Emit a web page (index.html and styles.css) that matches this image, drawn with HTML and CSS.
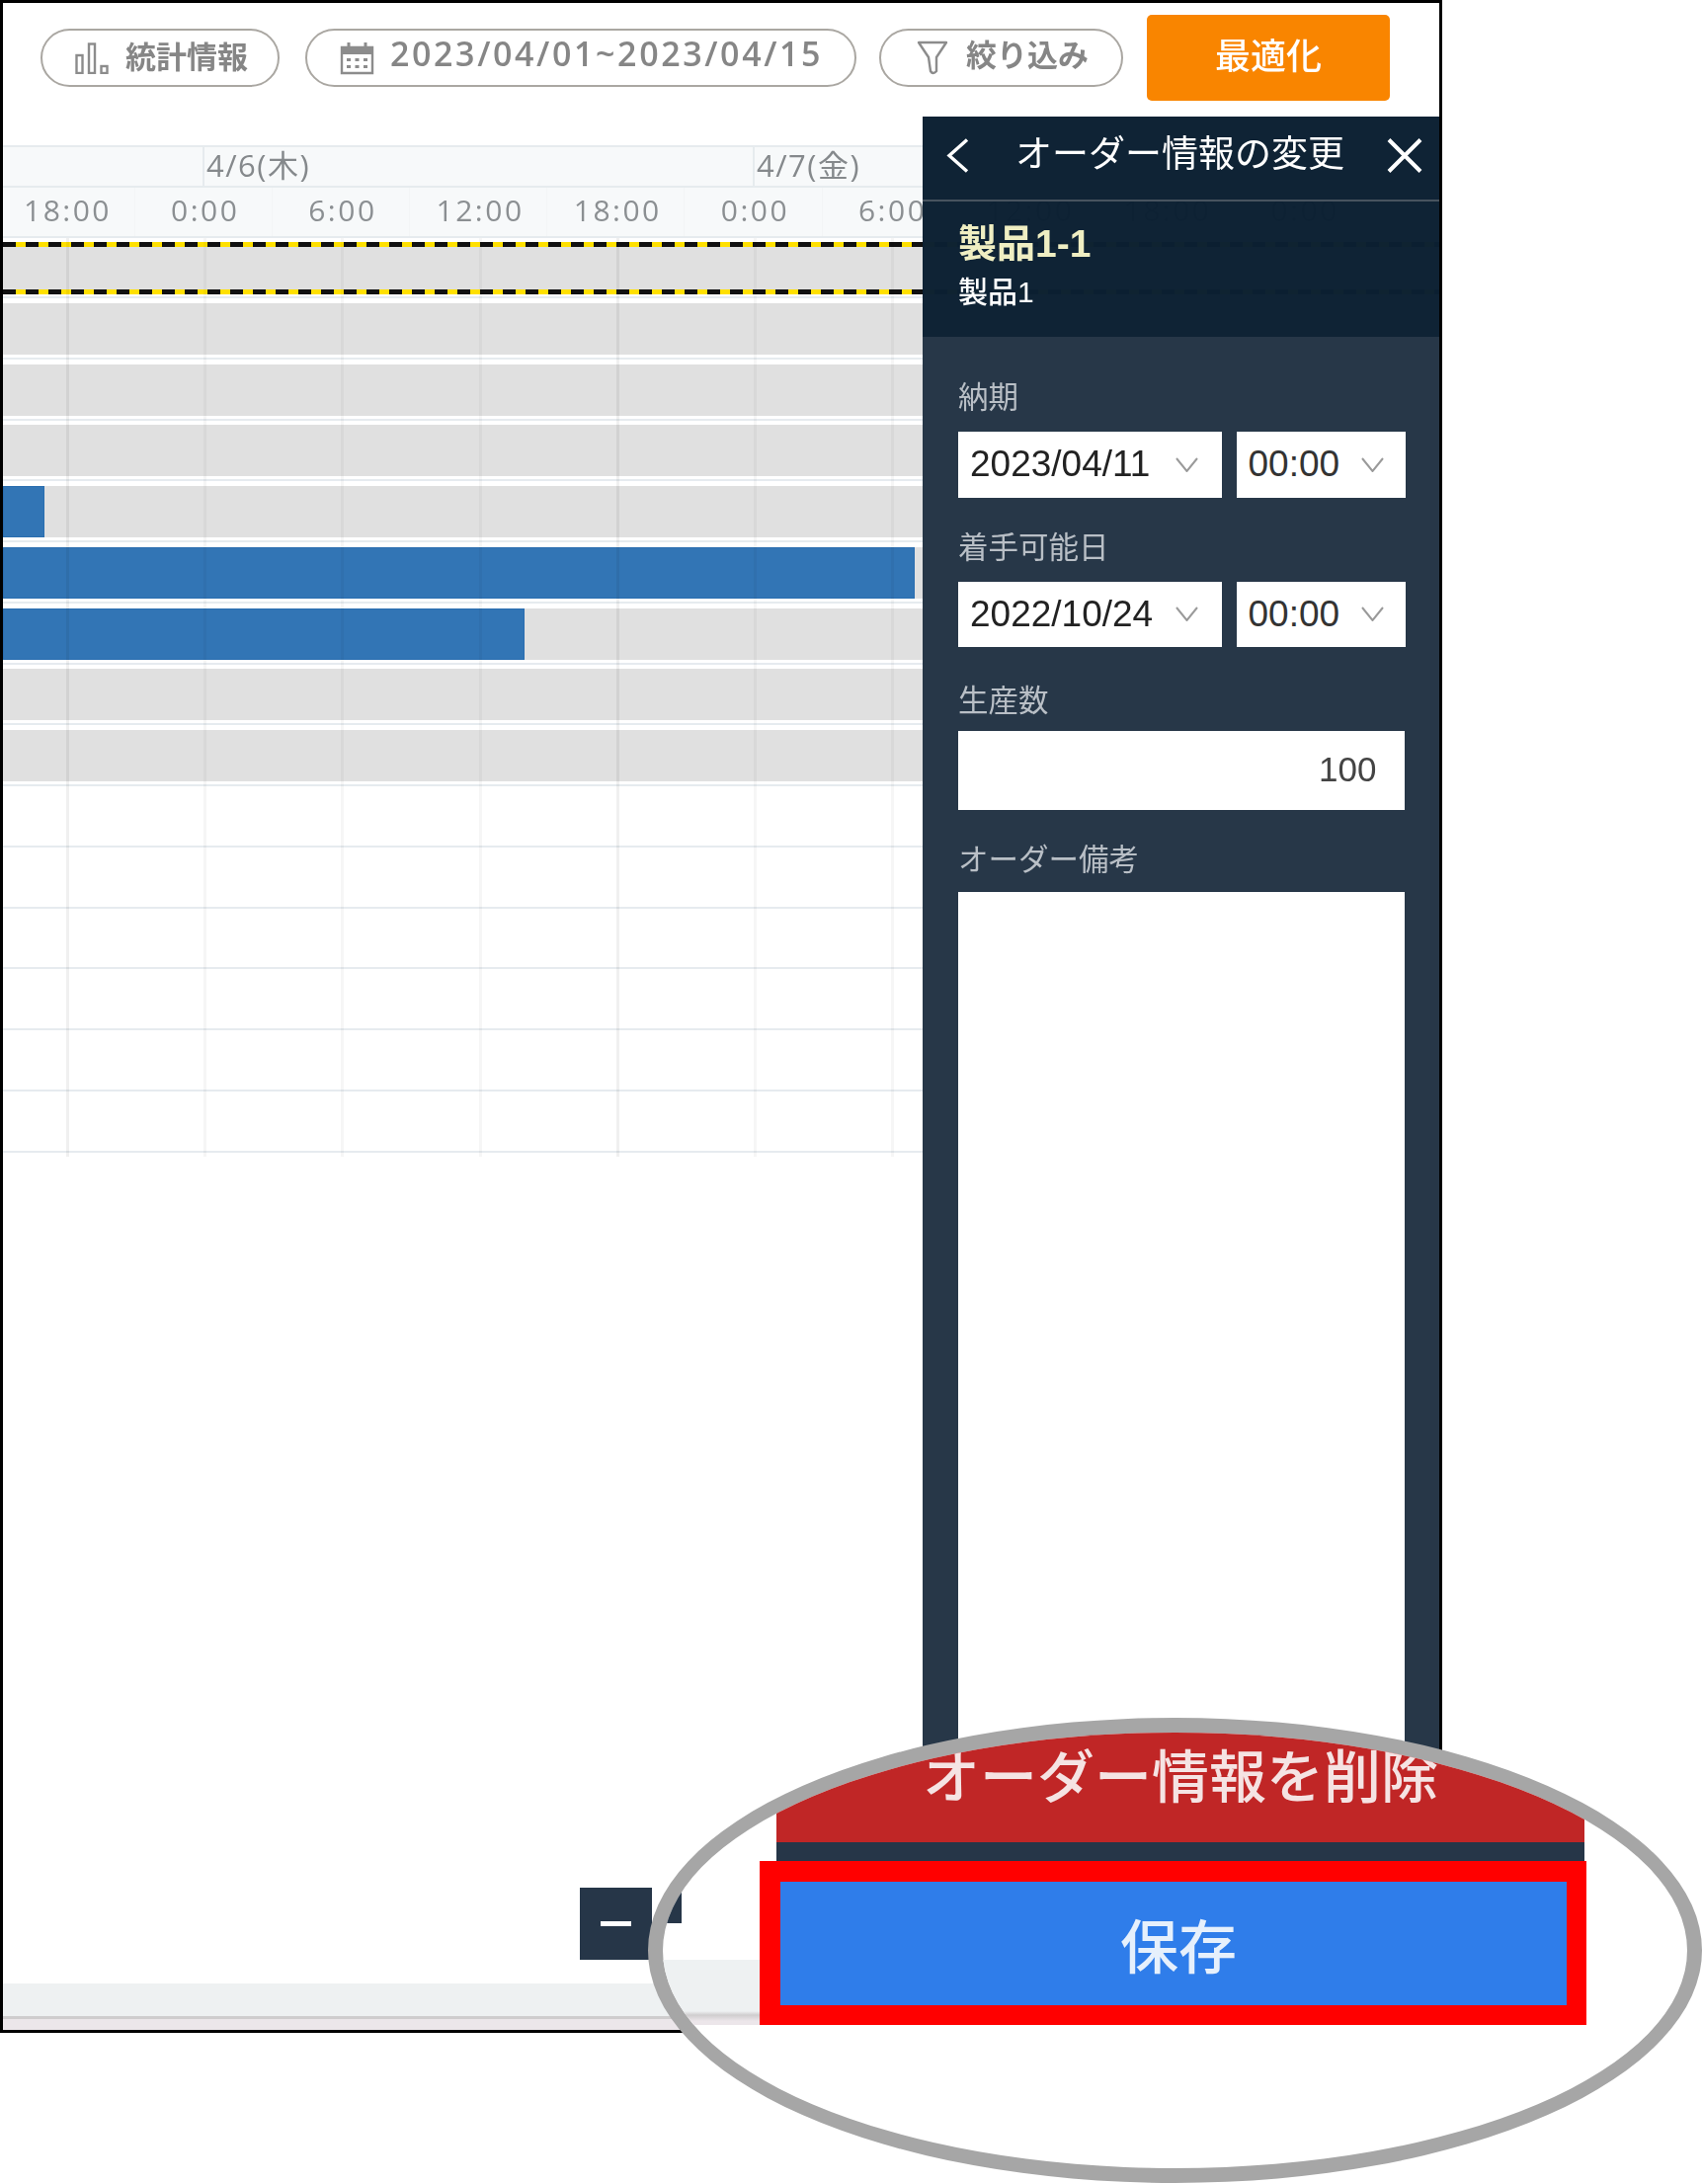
FILE: index.html
```html
<!DOCTYPE html>
<html lang="ja">
<head>
<meta charset="utf-8">
<title>オーダー情報の変更</title>
<link rel="stylesheet" href="styles.css">
</head>
<body>
<div class="frame">
  <div class="toolbar">
    <button class="pill pill-stats">
      <svg class="icon-stats" viewBox="0 0 34 32" fill="none" stroke="#8c8c8c" stroke-width="2.4"><rect x="1.5" y="13" width="6" height="18"/><rect x="14" y="1.5" width="6" height="29.5"/><rect x="26.5" y="24" width="6" height="7"/></svg>
      <span class="pill-text">統計情報</span>
    </button>
    <button class="pill pill-date">
      <svg class="icon-cal" viewBox="0 0 35 34" fill="none"><path d="M2 6h31v26H2z" stroke="#8c8c8c" stroke-width="2.4"/><path d="M2 6h31v7H2z" fill="#8c8c8c"/><path d="M9 1v7M26 1v7" stroke="#8c8c8c" stroke-width="3"/><path d="M7 17h4v3H7zM15.500 17h4v3h-4zM24 17h4v3h-4zM7 24h4v3H7zM15.500 24h4v3h-4zM24 24h4v3h-4z" fill="#8c8c8c"/></svg>
      <span class="date-text">2023/04/01~2023/04/15</span>
    </button>
    <button class="pill pill-filter">
      <svg class="icon-filter" viewBox="0 0 32 35" fill="none" stroke="#8c8c8c" stroke-width="2.4" stroke-linejoin="round"><path d="M2 2h28L20 17v14q-3.500 4-6 0L12 17z"/></svg>
      <span class="pill-text">絞り込み</span>
    </button>
    <button class="optimize"><span>最適化</span></button>
  </div>

  <div class="gantt">
    <div class="days">
      <div class="day day-blank"></div>
      <div class="day day-thu">4/6(木)</div>
      <div class="day day-fri">4/7(金)</div>
      <div class="day day-rest"></div>
    </div>
    <div class="times">
      <div class="time">18:00</div><div class="time">0:00</div><div class="time">6:00</div><div class="time">12:00</div><div class="time">18:00</div><div class="time">0:00</div><div class="time">6:00</div><div class="time">12:00</div><div class="time">18:00</div><div class="time">0:00</div>
    </div>
    <div class="rows">
      <div class="row row-first"><div class="slot slot-gray slot-picked"><div class="hazard"></div><div class="hazard"></div></div><div class="rule"></div></div>
      <div class="row"><div class="slot slot-gray"></div><div class="rule"></div></div>
      <div class="row"><div class="slot slot-gray"></div><div class="rule"></div></div>
      <div class="row"><div class="slot slot-gray"></div><div class="rule"></div></div>
      <div class="row"><div class="slot slot-gray"><div class="bar" style="width:42px"></div></div><div class="rule"></div></div>
      <div class="row"><div class="slot slot-gray"><div class="bar" style="width:923px"></div></div><div class="rule"></div></div>
      <div class="row"><div class="slot slot-gray"><div class="bar" style="width:528px"></div></div><div class="rule"></div></div>
      <div class="row"><div class="slot slot-gray"></div><div class="rule"></div></div>
      <div class="row"><div class="slot slot-gray"></div><div class="rule"></div></div>
      <div class="row"><div class="slot"></div><div class="rule"></div></div>
      <div class="row"><div class="slot"></div><div class="rule"></div></div>
      <div class="row"><div class="slot"></div><div class="rule"></div></div>
      <div class="row"><div class="slot"></div><div class="rule"></div></div>
      <div class="row"><div class="slot"></div><div class="rule"></div></div>
      <div class="row"><div class="slot"></div><div class="rule"></div></div>
      <div class="vlines">
        <div class="vline"></div><div class="vline vline-day"></div><div class="vline"></div><div class="vline"></div><div class="vline"></div><div class="vline vline-day"></div><div class="vline"></div><div class="vline"></div><div class="vline"></div><div class="vline vline-day"></div>
      </div>
    </div>
  </div>

  <div class="scrollstrip"></div>
  <div class="zoom-btn zoom-minus"><i></i></div>

  <aside class="panel">
    <header class="panel-head">
      <svg class="icon-back" viewBox="0 0 23 35" fill="none" stroke="#fff" stroke-width="3.400"><path d="M21 1.500 3 17.500l18 16"/></svg>
      <h2>オーダー情報の変更</h2>
      <svg class="icon-close" viewBox="0 0 36 35" fill="none" stroke="#fff" stroke-width="4"><path d="M2 1.500 34 33.500M34 1.500 2 33.500"/></svg>
    </header>
    <div class="product">
      <div class="product-title">製品1-1</div>
      <div class="product-sub">製品1</div>
    </div>
    <div class="form">
      <div class="field">
        <div class="label">納期</div>
        <div class="pair">
          <div class="select select-date"><span>2023/04/11</span><svg class="caret" viewBox="0 0 23 15" fill="none" stroke="#9a9a9a" stroke-width="2"><path d="M1 1l10.500 13L22 1"/></svg></div>
          <div class="select select-time"><span>00:00</span><svg class="caret" viewBox="0 0 23 15" fill="none" stroke="#9a9a9a" stroke-width="2"><path d="M1 1l10.500 13L22 1"/></svg></div>
        </div>
      </div>
      <div class="field">
        <div class="label">着手可能日</div>
        <div class="pair">
          <div class="select select-date"><span>2022/10/24</span><svg class="caret" viewBox="0 0 23 15" fill="none" stroke="#9a9a9a" stroke-width="2"><path d="M1 1l10.500 13L22 1"/></svg></div>
          <div class="select select-time"><span>00:00</span><svg class="caret" viewBox="0 0 23 15" fill="none" stroke="#9a9a9a" stroke-width="2"><path d="M1 1l10.500 13L22 1"/></svg></div>
        </div>
      </div>
      <div class="field field-num">
        <div class="label">生産数</div>
        <div class="number">100</div>
      </div>
      <div class="field field-note">
        <div class="label">オーダー備考</div>
        <div class="note"></div>
      </div>
    </div>
  </aside>
</div>

<div class="lens">
  <div class="lens-strip"></div>
  <div class="lens-plus"></div>
  <div class="lens-stack">
    <div class="delete"><span>オーダー情報を削除</span></div>
    <div class="band"></div>
    <div class="save-outline"><div class="save"><span>保存</span></div></div>
  </div>
</div>
</body>
</html>
```
FILE: styles.css
```css
* { box-sizing: border-box; }
html, body { margin: 0; padding: 0; background: #fff; }
body {
  width: 1723px;
  height: 2211px;
  position: relative;
  overflow: hidden;
  font-family: "Liberation Sans", "Noto Sans CJK JP", sans-serif;
}
.frame {
  width: 1460px;
  height: 2058px;
  border: 3px solid #000;
  position: relative;
  display: flex;
  flex-direction: column;
  overflow: hidden;
  background: #fff;
}

/* toolbar */
.toolbar {
  height: 111px;
  margin-bottom: 33px;
  padding-left: 38px;
  display: flex;
  align-items: center;
  flex: none;
  filter: blur(.35px);
}
.pill {
  height: 59px;
  border: 2px solid #aaa7a2;
  border-radius: 30px;
  background: #fff;
  display: flex;
  align-items: center;
  padding: 0;
  color: #868686;
  font-family: "Noto Sans CJK JP", sans-serif;
  font-size: 31px;
  font-weight: 700;
}
.pill-text { margin-top: -6px; white-space: nowrap; }
.pill-filter .pill-text { margin-top: -10px; }
.pill-stats { width: 242px; padding-left: 33px; gap: 17px; }
.pill-date { width: 558px; margin-left: 26px; padding-left: 33px; gap: 16px; }
.pill-filter { width: 247px; margin-left: 23px; padding-left: 36px; gap: 18px; }
.icon-stats { width: 34px; height: 32px; flex: none; }
.icon-cal { width: 35px; height: 34px; flex: none; }
.icon-filter { width: 32px; height: 35px; flex: none; }
.date-text {
  font-family: "Open Sans", "Noto Sans CJK JP", sans-serif;
  font-size: 34px;
  font-weight: 600;
  letter-spacing: 2.600px;
  margin-top: -10px;
  white-space: nowrap;
}
.optimize {
  width: 246px;
  height: 87px;
  margin-left: 24px;
  border: 0;
  border-radius: 5px;
  background: #f98500;
  color: #fff;
  font-family: "Noto Sans CJK JP", sans-serif;
  font-size: 36px;
  font-weight: 500;
  padding: 0 0 9px;
}

/* gantt */
.gantt { flex: none; filter: blur(.3px); }
.days {
  height: 43px;
  display: flex;
  background: #f7f9fa;
  border-top: 2px solid #e6ebee;
  border-bottom: 2px solid #e6ebee;
}
.day {
  border-right: 2px solid #e6ebee;
  color: #85898c;
  font-family: "Open Sans", "Noto Sans CJK JP", sans-serif;
  font-size: 31px;
  letter-spacing: 1.500px;
  line-height: 37px;
  white-space: nowrap;
  padding-left: 2px;
}
.day-blank { width: 204px; }
.day-thu { width: 557px; }
.day-fri { width: 557px; }
.day-rest { flex: 1; border-right: 0; }
.times {
  height: 51px;
  margin-left: -5.6px;
  display: flex;
  background: #f7f9fa;
  border-bottom: 2px solid #e6ebee;
}
.time {
  width: 139.2px;
  flex: none;
  text-align: center;
  color: #8b8f92;
  font-family: "Open Sans", sans-serif;
  font-size: 30px;
  letter-spacing: 2.500px;
  line-height: 45px;
  padding-left: 4px;
  border-right: 1px solid #f3f5f6;
}
.rows { position: relative; padding-top: 4px; }
.row { height: 61.75px; display: flex; flex-direction: column; }
.slot { height: 52px; flex: none; display: flex; }
.slot-gray { background: #e0e0e0; }
.slot-picked {
  flex-direction: column;
  justify-content: space-between;
  height: 53px;
}
.hazard {
  height: 5px;
  background: repeating-linear-gradient(90deg, #111 0 13px, #ffe000 13px 23px);
}
.rule { height: 2px; margin-top: 3px; background: #e6ebef; flex: none; }
.row-first .rule { margin-top: 2px; }
.bar {
  height: 100%;
  background: #3275b5;
  border: 1px solid #2a6eb0;
}
.vlines {
  position: absolute;
  inset: 0 0 0 0;
  display: grid;
  grid-template-columns: 64px repeat(9, 139.2px);
  pointer-events: none;
}
.vline { grid-row: 1; }
.vline + .vline { border-left: 3px solid rgba(0, 0, 0, .035); }
.vline-day + .vline { border-left: 3px solid rgba(0, 0, 0, .035); }
.vline.vline-day { border-left: 3px solid rgba(0, 0, 0, .06); }

/* bottom */
.scrollstrip {
  margin-top: auto;
  height: 47px;
  background: linear-gradient(#eef1f2 0 33px, #cfcdce 33px 36px, #ece6ea 36px);
  flex: none;
}
.zoom-btn {
  position: absolute;
  left: 584px;
  top: 1908px;
  width: 73px;
  height: 73px;
  background: #263648;
  display: flex;
  align-items: center;
  justify-content: center;
}
.zoom-btn i { width: 31px; height: 5px; background: #fff; }

/* side panel */
.panel {
  position: absolute;
  left: 931px;
  top: 115px;
  right: 0;
  height: 1760px;
  display: flex;
  flex-direction: column;
  color: #fff;
  filter: blur(.3px);
}
.panel-head {
  height: 86px;
  flex: none;
  display: flex;
  align-items: center;
  padding: 0 17px 6px 24px;
  background: rgba(11, 31, 50, .985);
  border-bottom: 2px solid #47535f;
}
.panel-head h2 {
  flex: 1;
  margin: 0 0 0 47px;
  font-size: 37px;
  line-height: 44px;
  font-weight: 400;
  white-space: nowrap;
}
.icon-back { width: 23px; height: 35px; flex: none; }
.icon-close { width: 36px; height: 35px; flex: none; }
.product {
  height: 137px;
  flex: none;
  padding: 20px 0 0 36px;
  background: rgba(11, 31, 50, .985);
}
.product-title {
  font-size: 39px;
  line-height: 46px;
  font-weight: 700;
  color: #efeec2;
}
.product-sub { font-size: 30px; line-height: 34px; margin-top: 9px; font-weight: 500; }
.form {
  flex: 1;
  display: flex;
  flex-direction: column;
  gap: 35px;
  padding: 46px 35px 0 36px;
  background: rgba(36, 53, 70, .99);
}
.label {
  height: 34px;
  line-height: 31px;
  font-size: 30.500px;
  color: #b9bfc6;
  margin-bottom: 16px;
  white-space: nowrap;
}
.pair { display: flex; gap: 15px; width: 453px; }
.select {
  height: 66.500px;
  background: #fff;
  color: #222;
  font-size: 37px;
  display: flex;
  align-items: center;
  justify-content: space-between;
  padding-right: 22px;
}
.select-date { width: 266.500px; padding-left: 12px; padding-right: 24px; }
.select-time { width: 171.500px; padding-left: 12px; color: #333; }
.caret { width: 23px; height: 15px; flex: none; }
.field-num { margin-top: 3.500px; }
.field-num .label { margin-bottom: 12px; }
.field-note .label { margin-bottom: 14px; }
.number {
  width: 451.500px;
  height: 80px;
  background: #fff;
  color: #444;
  font-size: 35px;
  line-height: 78px;
  text-align: right;
  padding-right: 28px;
}
.field-note { flex: 1; display: flex; flex-direction: column; }
.note { flex: 1; width: 451.500px; background: #fff; }

/* magnifying lens over the corner */
.lens {
  position: absolute;
  left: 656px;
  top: 1739px;
  width: 1067px;
  height: 471px;
  border: 15px solid #a6a6a6;
  border-radius: 50%;
  background: #fff;
  overflow: hidden;
}
.lens-strip {
  position: absolute;
  left: 0;
  top: 230px;
  width: 110px;
  height: 66px;
  background: linear-gradient(#eef1f2 0 52px, #cfcdce 56px, #ece6ea 62px);
}
.lens-plus {
  position: absolute;
  left: 0;
  top: 157px;
  width: 19px;
  height: 36px;
  background: #263648;
}
.lens-stack {
  position: relative;
  margin-left: 98px;
  width: 837px;
  display: flex;
  flex-direction: column;
}
.delete {
  height: 111px;
  margin: 0 2px 0 17px;
  background: #c02626;
  color: #f5e3e3;
  font-size: 58px;
  font-weight: 500;
  line-height: 58px;
  text-align: center;
  padding-top: 17px;
  white-space: nowrap;
  flex: none;
}
.delete span, .save span { filter: blur(.7px); display: inline-block; }
.band {
  height: 19px;
  margin: 0 2px 0 17px;
  background: #263648;
  flex: none;
}
.save-outline {
  height: 166px;
  border: 21px solid #f00;
  border-bottom-width: 20px;
  border-right-width: 20px;
  flex: none;
}
.save {
  height: 100%;
  background: #2f7dea;
  color: #e6f0fc;
  font-size: 59px;
  font-weight: 500;
  display: flex;
  align-items: center;
  justify-content: center;
  padding-left: 10px;
}
```
